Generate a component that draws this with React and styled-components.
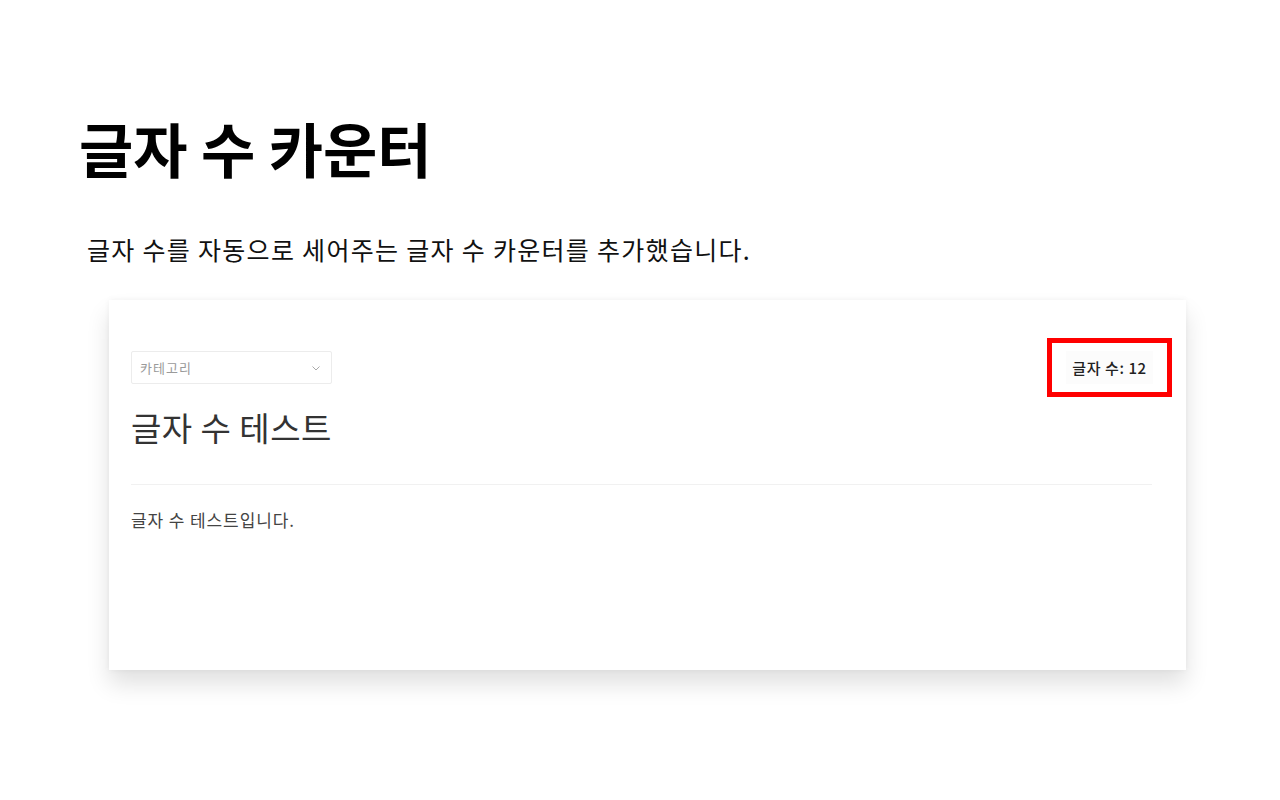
import React from "react";
import styled, { createGlobalStyle } from "styled-components";

const GlobalStyle = createGlobalStyle`
  html, body {
    margin: 0;
    padding: 0;
    background: #ffffff;
    font-family: "Noto Sans CJK KR", "Noto Sans", sans-serif;
  }
`;

const Page = styled.main`
  width: 1280px;
  height: 800px;
  box-sizing: border-box;
  padding: 108px 0 0 79px;
`;

const Title = styled.h1`
  margin: 0;
  font-size: 59px;
  font-weight: 700;
  line-height: 80px;
  color: #000;
`;

const Lead = styled.p`
  margin: 43px 0 0 8px;
  font-size: 25px;
  line-height: 36px;
  color: #111;
  letter-spacing: 1.3px;
`;

const Card = styled.section`
  margin: 33px 0 0 30px;
  width: 1077px;
  height: 370px;
  box-sizing: border-box;
  background: #fff;
  padding: 38px 34px 0 22px;
  box-shadow: 0 14px 22px rgba(0, 0, 0, 0.12), 0 0 6px rgba(0, 0, 0, 0.05);
`;

const TopRow = styled.div`
  display: flex;
  justify-content: space-between;
  align-items: flex-start;
`;

const Select = styled.div`
  margin-top: 13px;
  width: 201px;
  height: 33px;
  box-sizing: border-box;
  border: 1px solid #ececec;
  border-radius: 2px;
  display: flex;
  align-items: center;
  justify-content: space-between;
  padding: 0 9px 0 8px;
  font-size: 13px;
  letter-spacing: 1px;
  color: #9a9a9a;
`;

const Counter = styled.div`
  width: 125px;
  height: 59px;
  box-sizing: border-box;
  border: 5px solid #ff0000;
  display: flex;
  align-items: center;
  justify-content: center;
  margin-right: -20px;
`;

const CounterText = styled.span`
  padding: 6px 6px;
  background: #fcfcfc;
  font-size: 15px;
  letter-spacing: 0.6px;
  color: #222;
  font-weight: 500;
`;

const Heading = styled.h2`
  margin: 10px 0 0;
  font-size: 33px;
  font-weight: 400;
  line-height: 40px;
  letter-spacing: 0.5px;
  color: #333;
`;

const Divider = styled.hr`
  margin: 37px 0 0;
  border: 0;
  border-top: 1px solid #f1f1f1;
  width: 1021px;
`;

const Body = styled.p`
  margin: 23px 0 0;
  font-size: 17px;
  line-height: 24px;
  letter-spacing: 0.9px;
  color: #444;
`;

export default function App() {
  return (
    <>
      <GlobalStyle />
      <Page>
        <Title>글자 수 카운터</Title>
        <Lead>글자 수를 자동으로 세어주는 글자 수 카운터를 추가했습니다.</Lead>
        <Card>
          <TopRow>
            <Select>
              <span>카테고리</span>
              <svg width="12" height="12" viewBox="0 0 12 12" fill="none">
                <path d="M2.5 4.5 6 8l3.5-3.5" stroke="#aaa" strokeWidth="1" />
              </svg>
            </Select>
            <Counter>
              <CounterText>글자 수: 12</CounterText>
            </Counter>
          </TopRow>
          <Heading>글자 수 테스트</Heading>
          <Divider />
          <Body>글자 수 테스트입니다.</Body>
        </Card>
      </Page>
    </>
  );
}
